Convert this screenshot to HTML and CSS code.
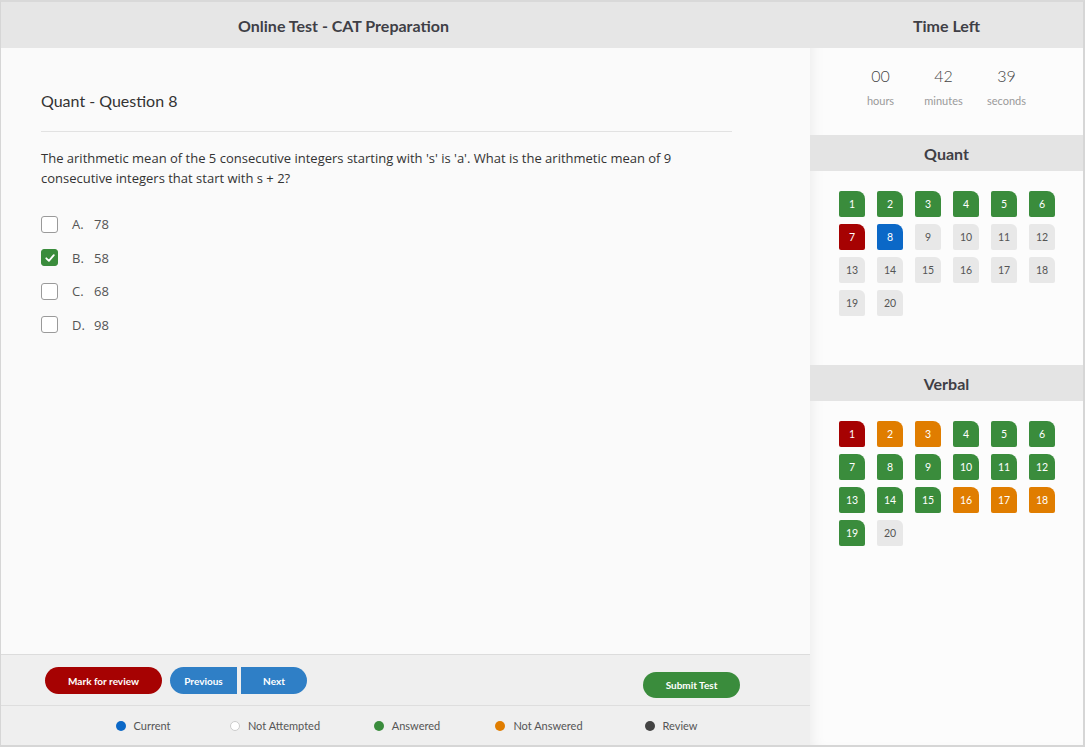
FILE: index.html
```html
<!DOCTYPE html>
<html>
<head>
<meta charset="utf-8">
<link rel="stylesheet" href="styles.css">
</head>
<body>
<div class="app">
  <section class="main">
    <header class="bar-title bar-main">Online Test - CAT Preparation</header>
    <div class="content">
      <h2 class="q-title">Quant - Question 8</h2>
      <hr class="rule">
      <p class="q-text">The arithmetic mean of the 5 consecutive integers starting with 's' is 'a'. What is the arithmetic mean of 9 consecutive integers that start with s + 2?</p>
      <ul class="options">
        <li class="option"><span class="check"></span><span class="letter">A.</span><span>78</span></li>
        <li class="option"><span class="check checked"><svg width="12" height="12" viewBox="0 0 12 12"><path d="M2.3 6.3 L4.9 8.8 L9.8 3.2" fill="none" stroke="#fff" stroke-width="1.8" stroke-linecap="round" stroke-linejoin="round"/></svg></span><span class="letter">B.</span><span>58</span></li>
        <li class="option"><span class="check"></span><span class="letter">C.</span><span>68</span></li>
        <li class="option"><span class="check"></span><span class="letter">D.</span><span>98</span></li>
      </ul>
    </div>
    <footer class="footer">
      <div class="actions">
        <button class="btn btn-red">Mark for review</button>
        <button class="btn btn-blue btn-prev">Previous</button>
        <button class="btn btn-blue btn-next">Next</button>
        <span class="spacer"></span>
        <button class="btn btn-green">Submit Test</button>
      </div>
      <div class="legend">
        <div class="legend-item"><span class="dot dot-blue"></span>Current</div>
        <div class="legend-item"><span class="dot dot-white"></span>Not Attempted</div>
        <div class="legend-item"><span class="dot dot-green"></span>Answered</div>
        <div class="legend-item"><span class="dot dot-orange"></span>Not Answered</div>
        <div class="legend-item"><span class="dot dot-dark"></span>Review</div>
      </div>
    </footer>
  </section>
  <aside class="side">
    <header class="bar-title">Time Left</header>
    <div class="timer">
      <div class="t-col"><span class="t-num">00</span><span class="t-lbl">hours</span></div>
      <div class="t-col"><span class="t-num">42</span><span class="t-lbl">minutes</span></div>
      <div class="t-col"><span class="t-num">39</span><span class="t-lbl">seconds</span></div>
    </div>
    <div class="sec-title">Quant</div>
    <div class="grid grid-quant">
      <span class="box g">1</span><span class="box g">2</span><span class="box g">3</span><span class="box g">4</span><span class="box g">5</span><span class="box g">6</span>
      <span class="box r">7</span><span class="box b">8</span><span class="box n">9</span><span class="box n">10</span><span class="box n">11</span><span class="box n">12</span>
      <span class="box n">13</span><span class="box n">14</span><span class="box n">15</span><span class="box n">16</span><span class="box n">17</span><span class="box n">18</span>
      <span class="box n">19</span><span class="box n">20</span>
    </div>
    <div class="sec-title">Verbal</div>
    <div class="grid grid-verbal">
      <span class="box r">1</span><span class="box o">2</span><span class="box o">3</span><span class="box g">4</span><span class="box g">5</span><span class="box g">6</span>
      <span class="box g">7</span><span class="box g">8</span><span class="box g">9</span><span class="box g">10</span><span class="box g">11</span><span class="box g">12</span>
      <span class="box g">13</span><span class="box g">14</span><span class="box g">15</span><span class="box o">16</span><span class="box o">17</span><span class="box o">18</span>
      <span class="box g">19</span><span class="box n">20</span>
    </div>
  </aside>
</div>
</body>
</html>
```

FILE: styles.css
```css
* { box-sizing: border-box; }
html, body { margin: 0; padding: 0; }
body {
  width: 1085px;
  height: 747px;
  overflow: hidden;
  background: #fff;
  font-family: Lato, "Open Sans", sans-serif;
  color: #444;
}
.app {
  display: flex;
  width: 1085px;
  height: 747px;
  border-top: 2px solid #d9d9d9;
  border-left: 1px solid #d6d6d6;
  border-right: 2px solid #d6d6d6;
  border-bottom: 2px solid #d6d6d6;
}
.main {
  width: 809px;
  display: flex;
  flex-direction: column;
  background: #fafafa;
}
.bar-title {
  height: 46px;
  background: #e6e6e6;
  display: flex;
  align-items: center;
  justify-content: center;
  font-family: Lato, sans-serif;
  font-weight: 700;
  font-size: 16px;
  color: #3f3f46;
}
.bar-main { padding-right: 124px; }
.content {
  flex: 1;
  padding: 43px 0 0 40px;
}
.q-title {
  margin: 0;
  font-family: Lato, sans-serif;
  font-weight: 400;
  font-size: 16px;
  line-height: 20px;
  color: #333;
}
.rule {
  width: 691px;
  margin: 20px 0 16px 0;
  border: 0;
  border-top: 1px solid #e2e2e2;
  height: 0;
}
.q-text {
  margin: 0;
  width: 691px;
  font-family: "Open Sans", sans-serif;
  font-size: 13px;
  line-height: 20px;
  color: #333;
}
.options {
  list-style: none;
  margin: 26px 0 0 0;
  padding: 0;
  display: flex;
  flex-direction: column;
  gap: 13.5px;
}
.option {
  display: flex;
  align-items: center;
  height: 20px;
  font-family: "Open Sans", sans-serif;
  font-size: 13px;
  color: #555;
}
.check {
  width: 17px;
  height: 17px;
  border: 1px solid #9a9a9a;
  border-radius: 3px;
  background: #fff;
  margin-right: 14px;
  display: flex;
  align-items: center;
  justify-content: center;
}
.check.checked {
  background: #3a8c3c;
  border-color: #3a8c3c;
}
.letter { width: 22px; }
.footer {
  height: 91px;
  border-top: 1px solid #dcdcdc;
  background: #efefef;
  display: flex;
  flex-direction: column;
}
.actions {
  height: 51px;
  display: flex;
  align-items: flex-start;
  padding: 12px 70px 0 44px;
  border-bottom: 1px solid #dedede;
}
.btn {
  border: 0;
  height: 27px;
  font-family: Lato, sans-serif;
  font-weight: 700;
  font-size: 10px;
  color: #fff;
  padding: 0;
  cursor: pointer;
}
.btn-red {
  width: 117px;
  background: #a60202;
  border-radius: 14px;
  margin-right: 8px;
}
.btn-blue { background: #2f7fc6; }
.btn-prev {
  width: 67px;
  border-radius: 14px 0 0 14px;
  margin-right: 4px;
}
.btn-next {
  width: 66px;
  border-radius: 0 14px 14px 0;
}
.spacer { flex: 1; }
.btn-green {
  width: 97px;
  height: 26px;
  margin-top: 5px;
  background: #3a8c3c;
  border-radius: 13px;
}
.legend {
  flex: 1;
  display: grid;
  grid-template-columns: repeat(5, 132px);
  padding-left: 76px;
  align-items: center;
}
.legend-item {
  display: flex;
  align-items: center;
  justify-content: center;
  font-family: Lato, sans-serif;
  font-size: 11px;
  color: #555;
}
.dot {
  width: 10px;
  height: 10px;
  border-radius: 50%;
  margin-right: 8px;
}
.dot-blue { background: #0b68c7; }
.dot-white { background: #fff; border: 1px solid #ccc; }
.dot-green { background: #3a8c3c; }
.dot-orange { background: #e07d00; }
.dot-dark { background: #444; }
.side {
  flex: 1;
  background: #fcfcfc;
  box-shadow: inset 10px 0 14px -8px rgba(0,0,0,0.07);
  display: flex;
  flex-direction: column;
}
.timer {
  height: 87px;
  display: flex;
  justify-content: center;
  padding: 18px 6px 0 0;
}
.t-col {
  width: 63px;
  display: flex;
  flex-direction: column;
  align-items: center;
}
.t-num {
  font-family: Lato, sans-serif;
  font-weight: 300;
  font-size: 16px;
  line-height: 20px;
  color: #444;
}
.t-lbl {
  margin-top: 8px;
  font-family: Lato, sans-serif;
  font-size: 11px;
  line-height: 14px;
  color: #9a9a9a;
}
.sec-title {
  height: 36px;
  background: #e4e4e4;
  display: flex;
  align-items: center;
  justify-content: center;
  font-family: Lato, sans-serif;
  font-weight: 700;
  font-size: 16px;
  color: #3f3f46;
}
.grid {
  display: grid;
  grid-template-columns: repeat(6, 26px);
  grid-auto-rows: 26px;
  column-gap: 12px;
  row-gap: 7px;
  padding: 20px 0 0 29px;
  align-content: start;
}
.grid-quant { height: 194px; }
.box {
  display: flex;
  align-items: center;
  justify-content: center;
  border-radius: 2px 8px 2px 2px;
  font-family: Lato, sans-serif;
  font-size: 10.5px;
  color: #fff;
}
.box.g { background: #3a8c3c; }
.box.r { background: #a60202; }
.box.b { background: #0b68c7; }
.box.o { background: #e07d00; }
.box.n { background: #e8e8e8; color: #555; border-radius: 2px 6px 2px 2px; }
```
